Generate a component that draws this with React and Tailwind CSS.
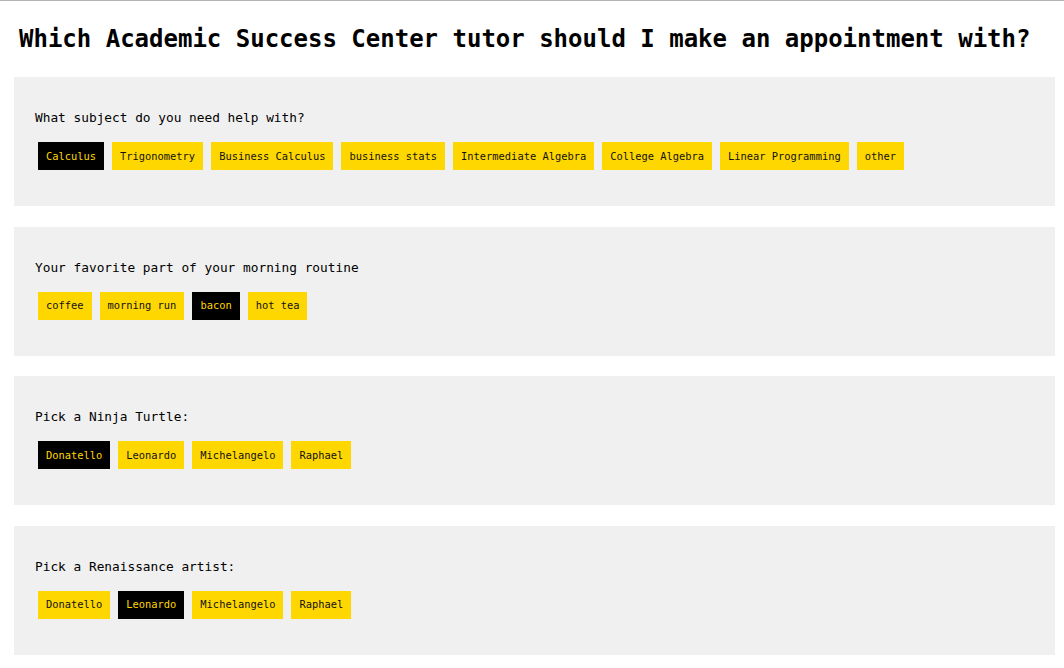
import { useState } from 'react';

const questions = [
    {
        label: 'What subject do you need help with?',
        options: ['Calculus', 'Trigonometry', 'Business Calculus', 'business stats', 'Intermediate Algebra', 'College Algebra', 'Linear Programming', 'other'],
        picked: 'Calculus',
    },
    {
        label: 'Your favorite part of your morning routine',
        options: ['coffee', 'morning run', 'bacon', 'hot tea'],
        picked: 'bacon',
    },
    {
        label: 'Pick a Ninja Turtle:',
        options: ['Donatello', 'Leonardo', 'Michelangelo', 'Raphael'],
        picked: 'Donatello',
    },
    {
        label: 'Pick a Renaissance artist:',
        options: ['Donatello', 'Leonardo', 'Michelangelo', 'Raphael'],
        picked: 'Leonardo',
    },
];

function Question({ label, options, picked }) {
    const [choice, setChoice] = useState(picked);

    return (
        <div className="bg-[#f0f0f0] ml-[14px] w-[1041px] pt-[33px] pb-[36px] pl-5">
            <p className="text-[12.8px] leading-4 text-black pl-px">{label}</p>
            <div className="flex flex-wrap gap-2 mt-4 pl-1">
                {options.map((opt) => (
                    <button
                        key={opt}
                        onClick={() => setChoice(opt)}
                        className={`h-7 px-2 text-[10.4px] leading-none cursor-pointer ${
                            choice === opt ? 'bg-black text-[#ffd700]' : 'bg-[#ffd700] text-[#111]'
                        }`}
                    >
                        {opt}
                    </button>
                ))}
            </div>
        </div>
    );
}

export default function App() {
    return (
        <div className="min-h-[668px] bg-white border-t border-[#b5b5b5] font-['DejaVu_Sans_Mono',monospace]">
            <h1 className="text-2xl leading-7 font-bold text-black pl-[19px] pt-6 mb-6">
                Which Academic Success Center tutor should I make an appointment with?
            </h1>
            <div className="flex flex-col gap-[20.5px]">
                {questions.map((q) => (
                    <Question key={q.label} {...q} />
                ))}
            </div>
        </div>
    );
}
